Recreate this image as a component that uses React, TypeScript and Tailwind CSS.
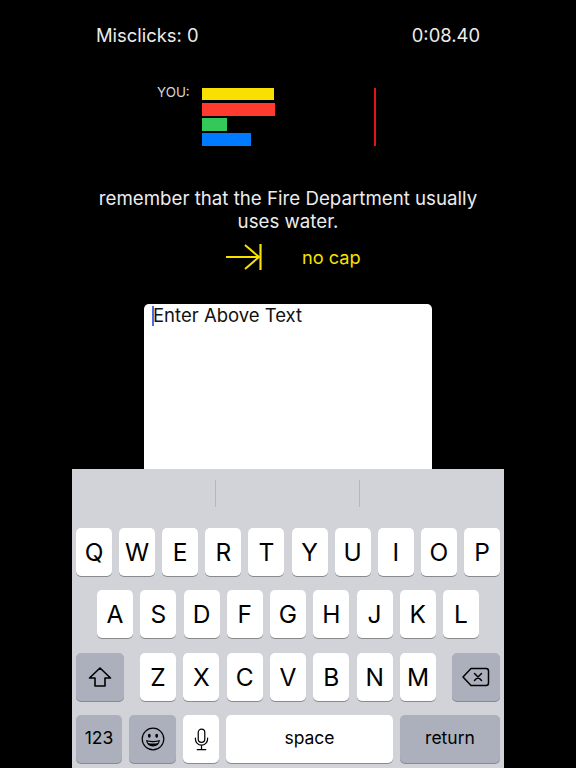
const font = { fontFamily: 'Inter, "Liberation Sans", Arial, sans-serif' };

const Key = ({ label }: { label: string }) => (
  <div className="flex h-[48px] w-[36px] items-center justify-center rounded-[5px] bg-white text-[24.5px] text-black shadow-[0_1px_0_#898a8d]">
    {label}
  </div>
);

const ShiftIcon = () => (
  <svg width="24" height="22" viewBox="0 0 24 22" fill="none" stroke="#000" strokeWidth="1.6" strokeLinejoin="round">
    <path d="M12 2 L22.5 12 H17 V20 H7 V12 H1.5 Z" />
  </svg>
);

const DeleteIcon = () => (
  <svg width="28" height="20" viewBox="0 0 28 20" fill="none" stroke="#000" strokeWidth="1.5" strokeLinejoin="round" strokeLinecap="round">
    <path d="M9 1.5 H24 a2.5 2.5 0 0 1 2.5 2.5 V16 a2.5 2.5 0 0 1 -2.5 2.5 H9 L1 10 Z" />
    <path d="M12.5 6.5 L19.5 13.5 M19.5 6.5 L12.5 13.5" />
  </svg>
);

const EmojiIcon = () => (
  <svg width="24" height="24" viewBox="0 0 24 24">
    <circle cx="12" cy="12" r="10.8" fill="none" stroke="#000" strokeWidth="1.2" />
    <ellipse cx="8.3" cy="8.8" rx="1.4" ry="2" fill="#000" />
    <ellipse cx="15.7" cy="8.8" rx="1.4" ry="2" fill="#000" />
    <path d="M5 13 Q12 15 19 13 Q18 19.5 12 19.5 Q6 19.5 5 13 Z" fill="#000" />
    <path d="M6.5 14.6 Q12 16 17.5 14.6 L17 16 Q12 17 7 16 Z" fill="#acb0bc" />
  </svg>
);

const MicIcon = () => (
  <svg width="15" height="23" viewBox="0 0 16 24" fill="none" stroke="#000" strokeWidth="1.3" strokeLinecap="round">
    <rect x="4.5" y="1" width="7" height="14" rx="3.5" />
    <path d="M1.5 10.5 V11.5 a6.5 6.5 0 0 0 13 0 V10.5 M8 18 V22.5 M3.5 22.8 H12.5" />
  </svg>
);

const ArrowIcon = () => (
  <svg width="36" height="26" viewBox="0 0 36 26" fill="none" stroke="#f8e000" strokeWidth="2">
    <path d="M0 13 H33 M19 1 L33 13 L19 25" />
    <path d="M34.5 0 V26" strokeWidth="2.2" />
  </svg>
);

export default function App() {
  return (
    <div className="flex h-[768px] w-[576px] flex-col overflow-hidden bg-black" style={font}>
      <div className="mx-[96px] mt-[23px] flex justify-between text-[18.4px] leading-[24px] text-[#ececec]">
        <span>Misclicks: 0</span>
        <span>0:08.40</span>
      </div>

      <div className="ml-[157px] mt-[41px] flex">
        <span className="mt-[-4px] h-[16px] w-[45px] text-[13.4px] leading-[16px] text-[#d8d8d8]">YOU:</span>
        <div className="flex w-[172px] flex-col">
          <div className="h-[12px] w-[72px] bg-[#f8e000]" />
          <div className="mt-[3px] h-[13px] w-[73px] bg-[#ff3b30]" />
          <div className="mt-[2px] h-[13px] w-[25px] bg-[#34c759]" />
          <div className="mt-[2px] h-[13px] w-[49px] bg-[#007aff]" />
        </div>
        <div className="h-[58px] w-[2px] bg-[#e01515]" />
      </div>

      <p className="mx-auto mt-[41px] w-[400px] text-center text-[18.7px] leading-[23px] text-[#ececec]">
        remember that the Fire Department usually uses water.
      </p>

      <div className="ml-[226px] mt-[11px] flex items-center">
        <ArrowIcon />
        <span className="ml-[40px] text-[18.2px] leading-[26px] text-[#f8e000]">no cap</span>
      </div>

      <div className="relative mx-auto mt-[34px] min-h-0 w-[288px] flex-1 rounded-t-[5px] bg-white pl-[9px] text-[18.5px] leading-[22px] text-[#111]">
        <span className="absolute left-[8px] top-[2px] h-[20px] w-[2px] bg-[#4a6ee0]" />
        Enter Above Text
      </div>

      <div className="mx-auto flex h-[299px] w-[432px] flex-col bg-[#d1d3d9]">
        <div className="flex h-[59px] items-start pl-[143px] pt-[11px]">
          <div className="h-[27px] w-px bg-[#b5b7bd]" />
          <div className="ml-[143px] h-[27px] w-px bg-[#b5b7bd]" />
        </div>

        <div className="flex justify-between px-[4px]">
          {['Q', 'W', 'E', 'R', 'T', 'Y', 'U', 'I', 'O', 'P'].map((k) => (
            <Key key={k} label={k} />
          ))}
        </div>

        <div className="mt-[14px] flex justify-between px-[25px]">
          {['A', 'S', 'D', 'F', 'G', 'H', 'J', 'K', 'L'].map((k) => (
            <Key key={k} label={k} />
          ))}
        </div>

        <div className="mt-[15px] flex justify-between px-[4px]">
          <div className="flex h-[48px] w-[48px] items-center justify-center rounded-[5px] bg-[#acb0bc] shadow-[0_1px_0_#898a8d]">
            <ShiftIcon />
          </div>
          <div className="flex w-[296px] justify-between">
            {['Z', 'X', 'C', 'V', 'B', 'N', 'M'].map((k) => (
              <Key key={k} label={k} />
            ))}
          </div>
          <div className="flex h-[48px] w-[48px] items-center justify-center rounded-[5px] bg-[#acb0bc] shadow-[0_1px_0_#898a8d]">
            <DeleteIcon />
          </div>
        </div>

        <div className="mt-[14px] flex justify-between px-[4px] text-[17.5px] text-black">
          <div className="flex h-[48px] w-[46px] items-center justify-center rounded-[5px] bg-[#acb0bc] pb-[1px] shadow-[0_1px_0_#898a8d]">123</div>
          <div className="flex h-[48px] w-[47px] items-center justify-center rounded-[5px] bg-[#acb0bc] shadow-[0_1px_0_#898a8d]">
            <EmojiIcon />
          </div>
          <div className="flex h-[48px] w-[36px] items-center justify-center rounded-[5px] bg-white shadow-[0_1px_0_#898a8d]">
            <MicIcon />
          </div>
          <div className="flex h-[48px] w-[167px] items-center justify-center rounded-[5px] bg-white pb-[1px] shadow-[0_1px_0_#898a8d]">space</div>
          <div className="flex h-[48px] w-[100px] items-center justify-center rounded-[5px] bg-[#acb0bc] pb-[1px] shadow-[0_1px_0_#898a8d]">return</div>
        </div>
      </div>
    </div>
  );
}
